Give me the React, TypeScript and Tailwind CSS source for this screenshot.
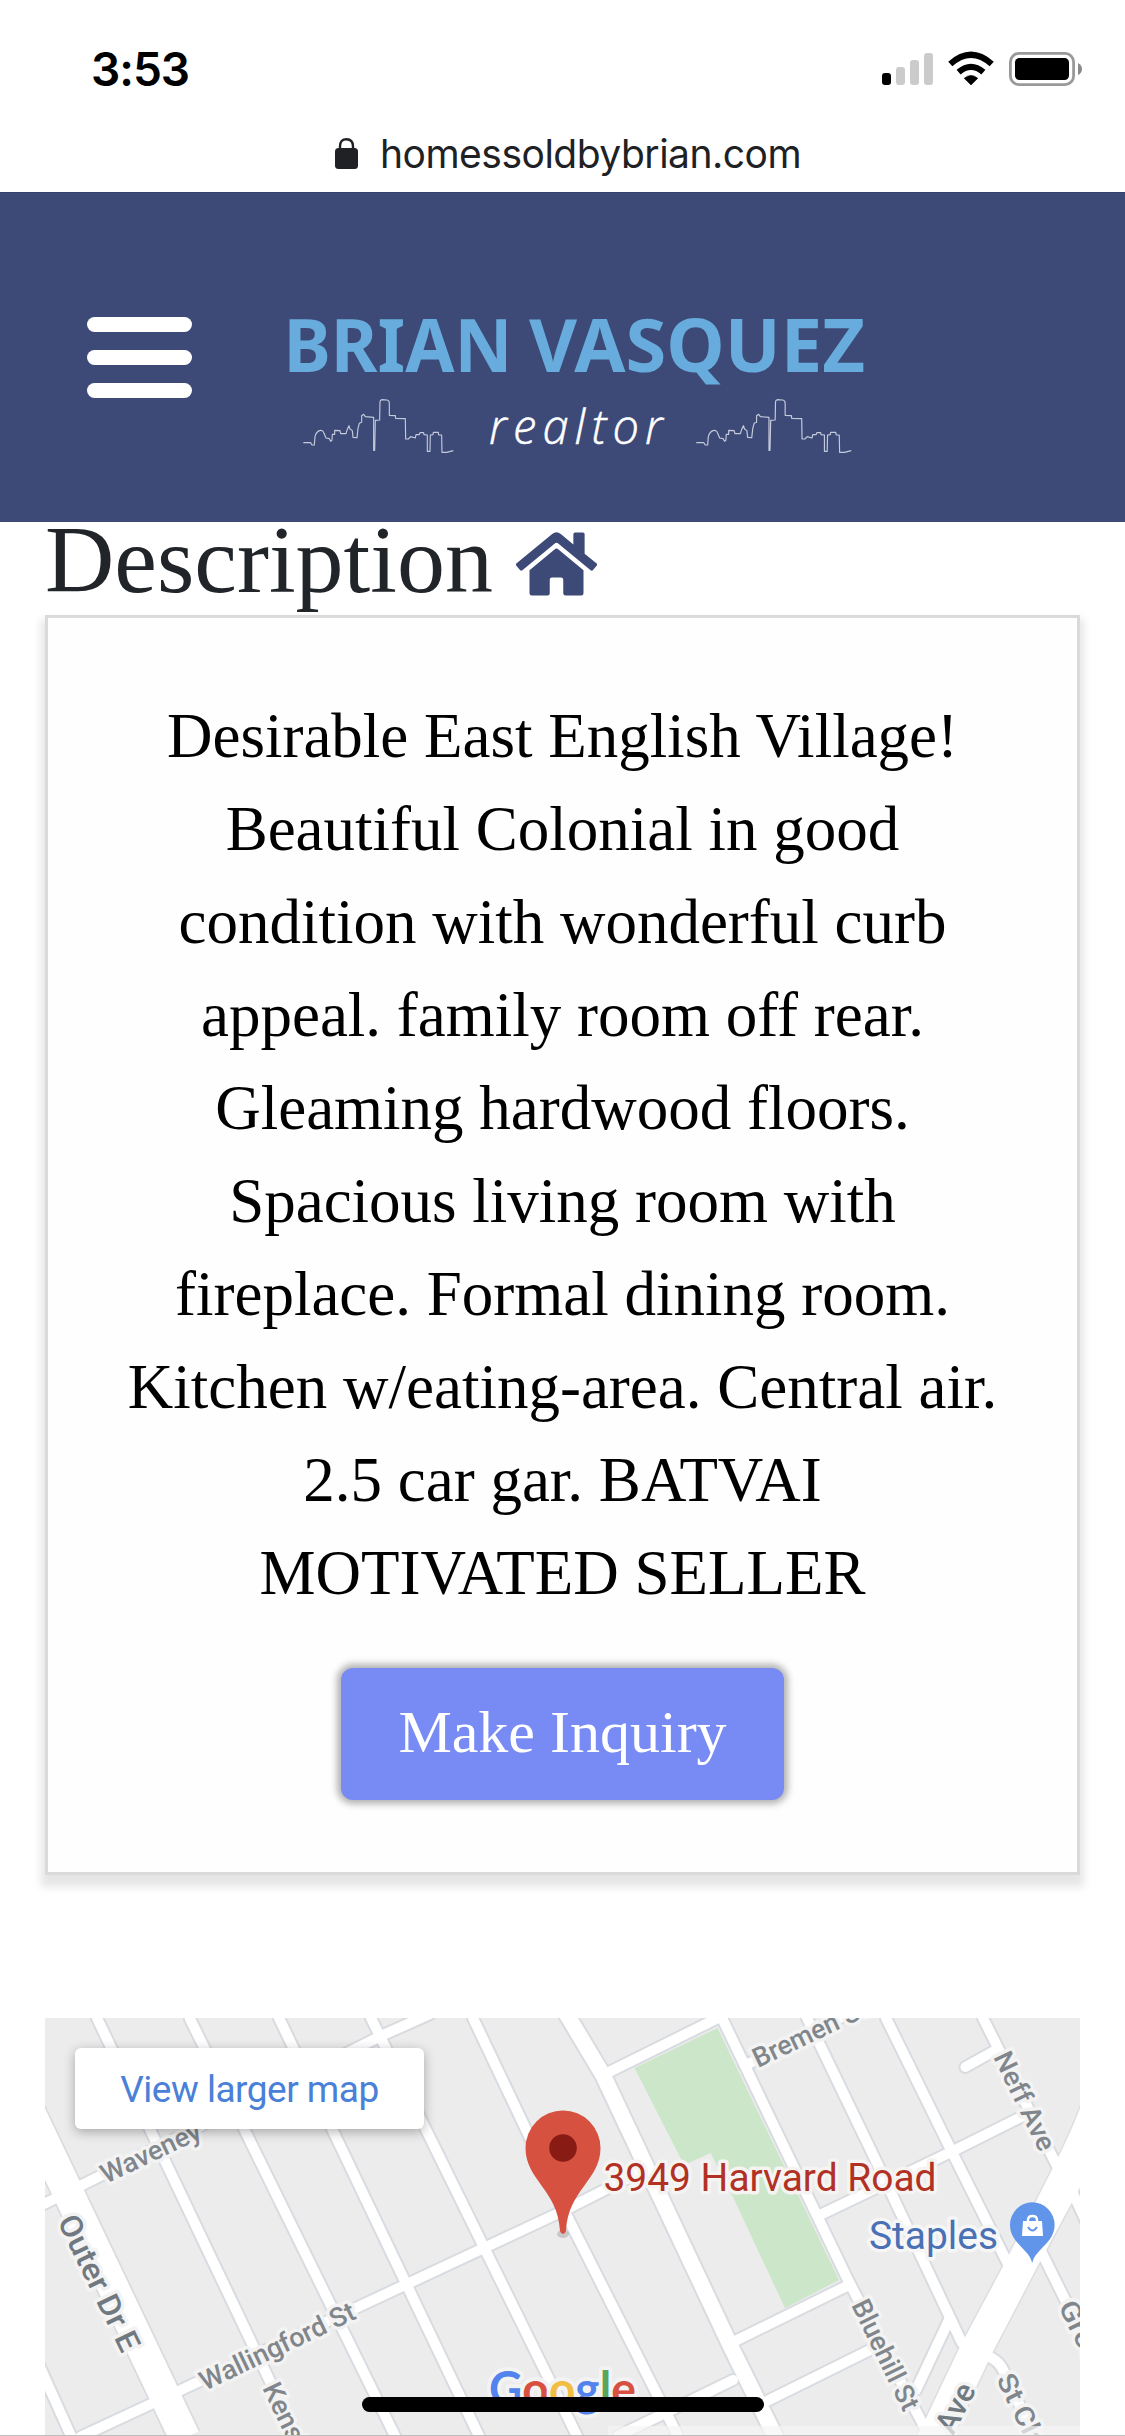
import React from "react";
import { FaHome } from "react-icons/fa";

const SKYLINE =
  "M40,158 L62,158 L66,165 L73,165 L75,140 C80,120 98,115 102,130 L108,144 L118,146 L122,154 L126,150 L127,133 L134,133 L134,121 L150,122 L152,131 L168,131 L172,118 L177,107 L180,117 L187,122 L189,142 L201,143 L204,115 L208,100 L215,97 L215,77 L221,73 L226,80 L251,82 L251,181 L254,181 L256,91 L269,90 L270,36 Q270,30 276,29 L291,30 Q298,31 298,40 L298,76 L316,77 L317,85 L346,86 L347,147 L355,147 L362,140 L376,144 L378,134 L388,134 L390,128 L401,128 L402,134 L412,135 L412,184 L420,184 L421,135 L429,134 L430,127 L445,127 L446,135 L455,135 L456,187 L470,187 L490,182";

function StatusBar() {
  return (
    <div className="flex h-[138px] items-start justify-between pl-[91px] pr-[43px]">
      <span className="mt-[42px] font-['Inter',sans-serif] text-[46px] font-semibold leading-[54px] tracking-[-1px] text-black">3:53</span>
      <svg className="mt-[50px]" width="202" height="38" viewBox="880 50 202 38">
        <rect x="882" y="73" width="9" height="12" rx="3" />
        <g fill="#cbcbcb">
          <rect x="896" y="67" width="9" height="18" rx="3" />
          <rect x="910" y="60" width="9" height="25" rx="3" />
          <rect x="924" y="53" width="9" height="32" rx="3" />
        </g>
        <path d="M971,85 L964.2,78.3 Q971,72.5 977.8,78.3 Z" stroke="#000" strokeWidth="0.6" strokeLinejoin="round" />
        <path d="M958.6,72.2 Q971,61.6 983.4,72.2" fill="none" stroke="#000" strokeWidth="6.2" />
        <path d="M950.3,64 Q971,45.6 991.7,64" fill="none" stroke="#000" strokeWidth="6.2" />
        <rect x="1010.4" y="53.4" width="63.2" height="31.2" rx="8.5" fill="none" stroke="#999" strokeWidth="2.8" />
        <rect x="1015" y="58" width="54" height="22" rx="4.5" />
        <path d="M1078,63 Q1082,65 1082,69 Q1082,73 1078,75 Z" fill="#8a8a8a" />
      </svg>
    </div>
  );
}

function AddressBar() {
  return (
    <div className="flex h-[54px] items-start pl-[334px]">
      <svg width="25" height="32" viewBox="0 0 25 32">
        <path d="M6 14 V8.5 Q6 1.2 12.5 1.2 Q19 1.2 19 8.5 V14" fill="none" stroke="#202124" strokeWidth="2.4" />
        <rect x="1" y="10" width="23" height="21" rx="3.5" fill="#202124" />
      </svg>
      <span className="ml-[21px] mt-[-8px] font-['Inter',sans-serif] text-[39px] leading-[48px] tracking-[-0.5px] text-[#202124]">homessoldbybrian.com</span>
    </div>
  );
}

function Header() {
  return (
    <header className="flex h-[330px] items-start border-t border-[#36426c] bg-[#3d4a77] pl-[87px]">
      <div className="mt-[124px] flex w-[105px] flex-col gap-[18px]">
        <div className="h-[15px] rounded-full bg-white" />
        <div className="h-[15px] rounded-full bg-white" />
        <div className="h-[15px] rounded-full bg-white" />
      </div>
      <svg className="ml-[88px] mt-[87px]" width="600" height="190" viewBox="280 280 600 190">
        <g fontFamily="'Noto Sans', sans-serif" fontWeight="700" fontSize="73" fill="#67acdc">
          <text x="283.5" y="371.5" textLength="229" lengthAdjust="spacingAndGlyphs">BRIAN</text>
          <text x="529" y="371.5" textLength="336" lengthAdjust="spacingAndGlyphs">VASQUEZ</text>
        </g>
        <text x="489" y="444" textLength="174" fontFamily="'Open Sans', sans-serif" fontStyle="italic" fontWeight="300" fontSize="47" fill="#fff" stroke="#fff" strokeWidth="0.5">realtor</text>
        <g fill="none" stroke="#c5cadb" strokeWidth="3.4" strokeLinejoin="round">
          <path transform="translate(290 390) scale(0.3333)" d={SKYLINE} />
          <path transform="translate(682.5 390) scale(0.3445 0.3333)" d={SKYLINE} />
        </g>
      </svg>
    </header>
  );
}

const MINOR = [
  "M97,2018 L296,2436",
  "M189.6,2018 L395,2436",
  "M279,2018 L479,2436",
  "M371,2018 L577,2436",
  "M473,2018 L569,2220 L678,2436",
  "M722,2018 L848,2280 L929,2436",
  "M807,2018 L877,2163 L962,2343",
  "M886,2018 L951,2150 L1012,2272",
  "M983,2018 L1060,2172",
  "M965.4,2067 L996,2050",
  "M949,2320 L916,2390",
  "M1038,2245 L1085,2340",
  "M1070,2187 L1090,2230",
  "M985,2355 Q1000,2360 1005,2374 L1036,2440",
  "M40,2367 L71,2436",
  "M40,2206 L82,2185 L383,2035 L430,2014",
  "M603,2075 L722,2016",
  "M746,2065 L870,2003",
  "M80,2437 L151,2404 L358,2307 L563,2211 L640,2172",
  "M820,2215 L951,2152 L1025,2115",
  "M731,2343 L847,2286",
  "M765,2402 L872,2349",
  "M618,2436 L733,2380",
];
const AVE = "M914,2442 L924,2423 L960,2347 L1005,2263 L1052,2170 Q1078,2120 1090,2080 L1100,2150 L1039,2263 L992,2353 L950,2442 Z";

function Roads({ minor, main, outer, extra }: { minor: number; main: number; outer: number; extra: number }) {
  return (
    <>
      {MINOR.map((d) => (
        <path key={d} d={d} strokeWidth={minor} strokeLinecap="round" strokeLinejoin="round" />
      ))}
      <path d="M560,2003 L603,2075 L731,2347 L777,2440" strokeWidth={main} />
      <path d="M-15,2018 L185,2438" strokeWidth={outer} />
      <path d={AVE} strokeWidth={extra} />
    </>
  );
}

function Label({ x, y, angle, length, size = 27, color = "#80868b", children }: { x: number; y: number; angle: number; length: number; size?: number; color?: string; children: string }) {
  return (
    <text
      transform={`translate(${x} ${y}) rotate(${angle})`}
      textLength={length}
      lengthAdjust="spacingAndGlyphs"
      fontSize={size}
      fontWeight="500"
      fill={color}
      stroke="#f3f3f3"
      strokeWidth="7"
      strokeLinejoin="round"
      paintOrder="stroke"
    >
      {children}
    </text>
  );
}

function StreetMap() {
  return (
    <section className="relative mx-[45px] h-[418px] overflow-hidden bg-[#ececec]">
      <svg className="block" width="1035" height="418" viewBox="45 2018 1035 418" fontFamily="Roboto, sans-serif">
        <g fill="#d8dbe0" stroke="#d8dbe0">
          <g fill="none"><Roads minor={14} main={19.5} outer={34} extra={3} /></g>
        </g>
        <path d="M634.6,2068 L717.5,2028 L839,2280 L785,2308 L733,2197 L710.6,2153 L684,2165 Z" fill="#cbe6c8" />
        <g fill="none" stroke="#fff"><Roads minor={10} main={15.5} outer={30.5} extra={0.5} /></g>
        <path d={AVE} fill="#fff" />
        <Label x={106} y={2184} angle={-25.5} length={108}>Waveney</Label>
        <Label x={205} y={2391} angle={-25.5} length={169}>Wallingford St</Label>
        <Label x={57} y={2221} angle={64} length={148} size={31} color="#70797f">Outer Dr E</Label>
        <Label x={262} y={2388} angle={64} length={100}>Kensing</Label>
        <Label x={758} y={2068} angle={-25.5} length={124}>Bremen St</Label>
        <Label x={993} y={2057} angle={64} length={107}>Neff Ave</Label>
        <Label x={851} y={2305} angle={64} length={120}>Bluehill St</Label>
        <Label x={1058} y={2306} angle={64} length={100}>Grosse</Label>
        <Label x={996} y={2379} angle={64} length={98}>St Clair</Label>
        <Label x={953} y={2436} angle={-63} length={52} size={31} color="#70797f">Ave</Label>
        <text x="603.5" y="2190.5" textLength="333" lengthAdjust="spacingAndGlyphs" fontSize="39.5" fill="#b13225" stroke="#f6f4f3" strokeWidth="7" strokeLinejoin="round" paintOrder="stroke">3949 Harvard Road</text>
        <text x="869" y="2248.5" textLength="129" lengthAdjust="spacingAndGlyphs" fontSize="38.5" fill="#4a70b5" stroke="#f6f6f6" strokeWidth="7" strokeLinejoin="round" paintOrder="stroke">Staples</text>
        <path d="M1032,2262.5 C1030,2250 1010,2243 1010,2225 A22.3,22.8 0 0 1 1054.6,2225 C1054.6,2243 1034.5,2250 1032.5,2262.5 Z" fill="#6095ea" />
        <path d="M1023,2221 H1042 L1043,2236 H1022 Z" fill="#fff" />
        <path d="M1028,2223 V2220 Q1028,2216 1032.4,2216 Q1037,2216 1037,2220 V2223" fill="none" stroke="#fff" strokeWidth="2.4" />
        <path d="M1028,2227 Q1032.5,2234 1037,2227" fill="none" stroke="#6095ea" strokeWidth="2" />
        <ellipse cx="563" cy="2234" rx="6" ry="4" fill="#888" opacity="0.35" />
        <path d="M560,2231 C558,2190 525.5,2180 525.5,2148 A37.5,37.5 0 0 1 600.5,2148 C600.5,2180 568,2190 566,2231 Q565,2234 563,2234 Q561,2234 560,2231 Z" fill="#d65140" />
        <circle cx="563" cy="2148" r="13.8" fill="#881b14" />
        <text x="489" y="2406" textLength="147" lengthAdjust="spacingAndGlyphs" fontFamily="Lato, sans-serif" fontWeight="700" fontSize="48" stroke="#f3f3f3" strokeWidth="8" strokeLinejoin="round" paintOrder="stroke">
          <tspan fill="#5383ec">G</tspan><tspan fill="#d85140">o</tspan><tspan fill="#f1bd42">o</tspan><tspan fill="#5383ec">g</tspan><tspan fill="#58a55c">l</tspan><tspan fill="#d85140">e</tspan>
        </text>
        <rect x="608" y="2426" width="472" height="10" fill="#f5f5f5" opacity="0.7" />
      </svg>
      <a className="absolute left-[30px] top-[30px] flex h-[81px] w-[349px] items-center justify-center rounded-[6px] bg-white pt-[2px] font-['Roboto',sans-serif] text-[37px] tracking-[-0.5px] text-[#4a80d8] shadow-[0_3px_12px_rgba(0,0,0,0.3)]">
        View larger map
      </a>
    </section>
  );
}

export default function App() {
  return (
    <div className="relative h-[2436px] w-[1125px] overflow-hidden bg-white">
      <StatusBar />
      <AddressBar />
      <Header />
      <main>
        <div className="flex h-[93px] items-start pl-[45px]">
          <h1 className="-mt-[17px] font-['Liberation_Serif',serif] text-[96px] leading-[110px] text-[#212529]">Description</h1>
          <FaHome className="ml-[23px] mt-[6px] h-[72px] w-[81px] text-[#3d4a77]" />
        </div>
        <section className="mx-[45px] flex h-[1260px] flex-col items-center border-[3px] border-[#dadada] bg-[#fefefe] pt-[72px] font-['Liberation_Serif',serif] shadow-[0_8px_8px_4px_rgba(0,0,0,0.1)]">
          <p className="whitespace-nowrap text-center text-[63px] leading-[93px] text-black">
            Desirable East English Village!<br />
            Beautiful Colonial in good<br />
            condition with wonderful curb<br />
            appeal. family room off rear.<br />
            Gleaming hardwood floors.<br />
            Spacious living room with<br />
            fireplace. Formal dining room.<br />
            Kitchen w/eating-area. Central air.<br />
            2.5 car gar. BATVAI<br />
            MOTIVATED SELLER
          </p>
          <button className="mt-[48px] h-[132px] w-[443px] rounded-[12px] bg-[#788af3] pb-[5px] text-[60px] leading-none text-white shadow-[0_0_7px_4px_rgba(0,0,0,0.3)]">
            Make Inquiry
          </button>
        </section>
        <div className="h-[143px]" />
        <StreetMap />
      </main>
      <div className="absolute left-[362px] top-[2397px] h-[15px] w-[402px] rounded-full bg-black" />
      <div className="absolute bottom-0 left-0 h-px w-full bg-[#bdbdbd]" />
    </div>
  );
}
